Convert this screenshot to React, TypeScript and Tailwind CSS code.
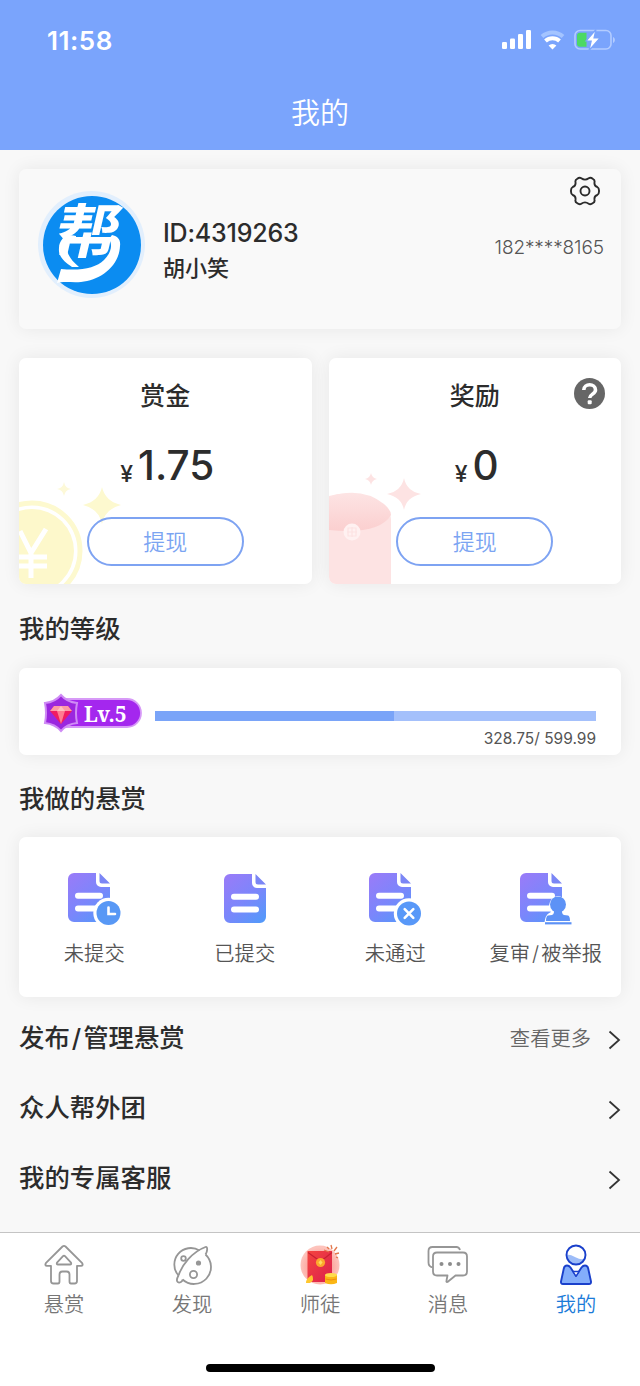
// App.tsx - "Mine" tab of the bounty app
import type { ReactNode } from "react";

type IconProps = {
  className?: string;
};

type DocIconProps = {
  id: string;
  dx?: number;
  dy?: number;
  children?: ReactNode;
};

type WalletCardProps = {
  title: string;
  amount: string;
  art: ReactNode;
  help?: boolean;
};

const CARD = "bg-white rounded-[7px] shadow-[0_0_18px_rgba(0,0,0,0.07)]";

// Status bar
const StatusIcons = () => (
  <svg width="116" height="24" viewBox="0 0 116 24" fill="none">
    <rect x="2" y="14" width="5" height="7" rx="1.3" fill="#fff" />
    <rect x="10" y="10.500" width="5" height="10.500" rx="1.300" fill="#fff" />
    <rect x="18" y="6" width="5" height="15" rx="1.300" fill="#fff" />
    <rect x="26" y="2" width="5" height="19" rx="1.300" fill="#fff" />
    <path d="M42 8.500a15.500 15.500 0 0 1 21 0" stroke="#a4c4ff" strokeWidth="4" />
    <path d="M45.500 13a10.300 10.300 0 0 1 14 0" stroke="#fff" strokeWidth="4" />
    <path d="M48.600 17.500a5.500 5.500 0 0 1 7.800 0l-3.900 4z" fill="#fff" />
    <rect x="75" y="2.500" width="36" height="18.500" rx="5" stroke="#b3ccff" strokeWidth="1.600" />
    <path d="M80 4.800h6.500v14H80a3 3 0 0 1-3-3v-8a3 3 0 0 1 3-3z" fill="#4cd964" />
    <path d="M113 9c2.500 1 2.500 5 0 6z" fill="#b3ccff" />
    <path d="M96 1.500L86 13h5.200l-2.200 9.500L100 10h-6z" fill="#fff" stroke="#7aa4fc" strokeWidth="1.200" />
  </svg>
);

// Brand mark: slanted lettering over a heart shaped hand
const Avatar = () => (
  <div className="relative flex h-[107px] w-[107px] items-center justify-center rounded-full bg-[#e2effd]">
    <div className="h-[98px] w-[98px] rounded-full bg-[#0b8cf1]" />
    <span className="absolute left-[25px] top-[11px] origin-top -skew-x-12 scale-y-[0.92] text-[64px] font-bold leading-[64px] text-white">
      帮
    </span>
    <svg className="absolute inset-0" width="107" height="107" viewBox="0 0 107 107" fill="#fff">
      <path d="M38 45c-9-3-17 3-17 12-1 9 6 14 13 19h7c-7-6-12-12-12-19 0-5 4-9 9-8z" />
      <path d="M74 44c5 1 9 4 8 11-1 21-20 34-39 36-8 1-17-1-24 1l4-14c20 2 35-1 43-9 7-7 9-15 5-21z" />
    </svg>
  </div>
);

const GearIcon = ({ className }: IconProps) => (
  <svg className={className} width="30" height="30" viewBox="0 0 30 30" fill="none" stroke="#2b2b2b" strokeWidth="1.900" strokeLinejoin="round">
    <path d="M7 3Q9.500 1 11.300 2.300Q15 5 18.700 2.300Q20.500 1 23 3Q25 4 24.500 6.300Q24 10 27.300 11Q29.200 12 29 15Q29.200 18 27.300 19Q24 20 24.500 23.700Q25 26 23 27Q20.500 29 18.700 27.700Q15 25 11.300 27.700Q9.500 29 7 27Q5 26 5.500 23.700Q6 20 2.700 19Q.8 18 1 15Q.8 12 2.700 11Q6 10 5.500 6.300Q5 4 7 3z" />
    <circle cx="15" cy="15" r="4.500" />
  </svg>
);

// Faded artwork in the corners of the wallet cards
const CoinArt = () => (
  <svg className="absolute bottom-0 left-0" width="110" height="110" viewBox="0 0 110 110" fill="none">
    <circle cx="13" cy="77" r="48" stroke="#fdf9cf" strokeWidth="5" />
    <circle cx="13" cy="77" r="42" fill="#fdf8cb" />
    <path d="M1 57l11 22 15-24M12 78v26M0 83h28M0 92h28" stroke="#fff" strokeWidth="5" />
    <path d="M83 13q3 14 19 18q-16 4-19 19q-3-15-19-19q16-4 19-18z" fill="#fdf9cf" />
    <path d="M45 8q1 6 7 7q-6 1-7 7q-1-6-7-7q6-1 7-7z" fill="#fdf9d8" />
  </svg>
);

const PacketArt = () => (
  <svg className="absolute bottom-0 left-0" width="110" height="115" viewBox="0 0 110 115" fill="none">
    <defs>
      <linearGradient id="flap" x1="0" y1="0" x2="0" y2="1">
        <stop offset="0" stopColor="#fde4e4" />
        <stop offset="1" stopColor="#fbcfcf" />
      </linearGradient>
    </defs>
    <path d="M0 27q30-8 54 10q8 6 8 14v64H0z" fill="#fde3e3" />
    <path d="M0 28Q32 17 55 35q7 6 7 11Q50 66 0 61z" fill="url(#flap)" />
    <circle cx="23" cy="63" r="8.500" fill="#fff1f1" />
    <path d="M19 59h8v8h-8zM23 58v10M18 63h10" stroke="#fde3e3" strokeWidth="1.200" />
    <path d="M75 9q2.500 13 17 16q-14.500 3-17 16q-2.500-13-17-16q14.500-3 17-16z" fill="#fde3e3" />
    <path d="M42 4q1 5 6 6q-5 1-6 6q-1-5-6-6q5-1 6-6z" fill="#fde3e3" />
  </svg>
);

const WalletCard = ({ title, amount, art, help }: WalletCardProps) => (
  <div className={`relative flex h-[226px] flex-1 flex-col items-center overflow-hidden pt-[20px] ${CARD}`}>
    {art}
    <h2 className="text-[25px] font-medium leading-[36px]">{title}</h2>
    {help && (
      <svg className="absolute right-[16px] top-[20px]" width="31" height="31" viewBox="0 0 31 31" fill="none">
        <circle cx="15.500" cy="15.500" r="15.500" fill="#666" />
        <path d="M9.800 12c0-7 11.700-7 11.700 0 0 4-5.800 4.200-5.800 8" stroke="#fff" strokeWidth="3.600" />
        <rect x="13.700" y="22.200" width="4" height="4" rx="1" fill="#fff" />
      </svg>
    )}
    <div className="mt-[27px] flex h-[50px] items-baseline gap-[5px] pl-[4px] leading-[50px]">
      <span className="relative top-[2px] text-[23px] font-medium">¥</span>
      <span className="text-[40.500px] font-medium">{amount}</span>
    </div>
    <button className="relative mt-[26px] h-[49px] w-[157px] rounded-full border-2 border-[#7ea3f2] text-[22px] font-[350] leading-[46px] text-[#7ba4f2]">
      提现
    </button>
  </div>
);

const LevelBadge = () => (
  <div className="relative h-[40px] w-[100px]">
    <svg className="absolute inset-0" width="100" height="40" viewBox="0 0 100 40">
      <path d="M20 6h64a14 14 0 0 1 0 28H20z" fill="#a427ee" stroke="#d79af7" strokeWidth="1.800" />
      <path d="M18 2q6 7 16 8q-2 10 0 20q-10 1-16 8q-6-7-16-8q2-10 0-20q10-1 16-8z" fill="#9b27df" stroke="#cf8bf5" strokeWidth="2" />
      <path d="M11 13h14l4 5-11 13L7 18z" fill="#f01c62" />
      <path d="M11 13h14l4 5H7z" fill="#ff9aa6" />
      <path d="M14 18h8l-4 13z" fill="#ff7c91" />
      <path d="M18 13l4 5h-8z" fill="#ffc1bf" />
    </svg>
    <span className="absolute left-[41px] top-[9px] font-['Noto_Serif','Liberation_Serif',serif] text-[21px] font-bold leading-[25px] text-white">
      Lv.5
    </span>
  </div>
);

// Shared document shape, badges are passed as children
const DocIcon = ({ id, dx = 0, dy = 0, children }: DocIconProps) => (
  <svg width="60" height="60" viewBox="0 0 60 60" fill="none">
    <defs>
      <linearGradient id={id} x1="5" y1="5" x2="48" y2="56" gradientUnits="userSpaceOnUse">
        <stop stopColor="#9a7bf8" />
        <stop offset=".5" stopColor="#7b86fb" />
        <stop offset="1" stopColor="#4b9dfa" />
      </linearGradient>
    </defs>
    <g transform={`translate(${dx} ${dy})`}>
      <path d="M10 5h22v9a5 5 0 0 0 5 5h9v29a6 6 0 0 1-6 6H10a6 6 0 0 1-6-6V11a6 6 0 0 1 6-6z" fill={`url(#${id})`} />
      <path d="M35.500 5l10.500 10.500h-8a2.500 2.500 0 0 1-2.500-2.500z" fill="#7b86f5" />
      <path d="M14 27.700h22M14 40.500h22" stroke="#fff" strokeWidth="6" strokeLinecap="round" />
    </g>
    {children}
  </svg>
);

const tasks = [
  {
    label: "未提交",
    icon: (
      <DocIcon id="doc-pending">
        <circle cx="44.500" cy="45" r="15.200" fill="#fff" />
        <circle cx="44.500" cy="45" r="12" fill="#5898f5" />
        <path d="M44.500 39.500v6.500h6.500" stroke="#fff" strokeWidth="2.600" strokeLinecap="round" />
      </DocIcon>
    ),
  },
  {
    label: "已提交",
    icon: <DocIcon id="doc-done" dx={5} dy={1} />,
  },
  {
    label: "未通过",
    icon: (
      <DocIcon id="doc-failed">
        <circle cx="44" cy="45.500" r="15.200" fill="#fff" />
        <circle cx="44" cy="45.500" r="12" fill="#5898f8" />
        <path d="M39.700 41.200l8.600 8.600M48.300 41.200l-8.600 8.600" stroke="#fff" strokeWidth="2.600" strokeLinecap="round" />
      </DocIcon>
    ),
  },
  {
    label: "复审/被举报",
    icon: (
      <DocIcon id="doc-review">
        <path
          d="M42 30a8 8 0 0 1 5 13l1 3q5 1 6 7v4H30l1-5q1-5 5-6l1-3a8 8 0 0 1 5-13z"
          fill="#fff"
          stroke="#fff"
          strokeWidth="4"
        />
        <circle cx="42" cy="36.500" r="8" fill="#5d92f6" />
        <path d="M37.500 40h9c-1 4-.5 6.500 1.500 7l4 .5q2 .5 2 5.500H30q0-5 2-5.500l4-.5c2-.5 2.500-3 1.500-7z" fill="#5d92f6" />
        <path d="M29 55.300h26.500" stroke="#5d92f6" strokeWidth="2.200" />
      </DocIcon>
    ),
  },
];

const links = [
  { label: "发布/管理悬赏", extra: "查看更多" },
  { label: "众人帮外团" },
  { label: "我的专属客服" },
];

// Gives the slash between two words a little air
const Label = ({ text }: { text: string }) => {
  const [head, tail] = text.split("/");
  if (!tail) return <>{text}</>;
  return (
    <>
      {head}
      <span className="mx-[2px]">/</span>
      {tail}
    </>
  );
};

const HomeIcon = () => (
  <svg width="42" height="42" viewBox="0 0 42 42" fill="none" stroke="#969696" strokeWidth="1.800" strokeLinejoin="round">
    <path d="M19.500 2.500q1.500-1.200 3 0l16.700 16.700q1.300 2.300-1.200 2.600h-4V37q0 2.500-2.500 2.500H28q-1.500 0-1.500-2v-7q0-3-3-3h-4q-3 0-3 3v7q0 2-1.500 2h-4.500Q8 39.500 8 37V21.800H4Q1.500 21.500 2.800 19.200z" />
    <path d="M20 12.200q1-1 2 0l6 6.500q.8 1.800-1 1.800H15q-1.800 0-1-1.800z" />
  </svg>
);

const DiscoverIcon = () => (
  <svg width="42" height="42" viewBox="0 0 42 42" fill="none" stroke="#969696" strokeWidth="1.800" strokeLinejoin="round">
    <path d="M28.500 6.500A16.500 16.500 0 0 0 7.500 31.500M34.500 10.500A16.500 16.500 0 0 1 11.500 35.500" />
    <path d="M7.500 31.500C11 21 21 8 34.500 3c2.500-.7 2 4.500 0 7.500M7.500 31.500c-3.500 6-.5 8 2.500 6.500 1-.5 1.500-1.500 1.500-2.500" />
    <circle cx="12.500" cy="14.500" r="2.300" />
    <circle cx="27.500" cy="19" r="1.700" fill="#969696" />
    <circle cx="22.500" cy="30.500" r="3.600" />
  </svg>
);

const MentorIcon = () => (
  <svg width="42" height="42" viewBox="0 0 42 42" fill="none">
    <defs>
      <radialGradient id="glow" cx=".5" cy=".55" r=".5">
        <stop offset="0" stopColor="#fb7d73" />
        <stop offset="1" stopColor="#fdc3bc" />
      </radialGradient>
      <linearGradient id="packet" x1="0" y1="0" x2="1" y2="1">
        <stop offset="0" stopColor="#f4463f" />
        <stop offset="1" stopColor="#dc1f4d" />
      </linearGradient>
    </defs>
    <circle cx="21" cy="21" r="19.500" fill="url(#glow)" />
    <path d="M8.500 7H33v31H12q-3.500 0-3.500-3z" fill="url(#packet)" />
    <path d="M9 8.500l12.500 9 11.500-9" stroke="#c91f32" strokeWidth="1.100" />
    <circle cx="21.500" cy="18.500" r="4.600" fill="#fca92d" />
    <path d="M21.500 16l2 2.500-2 2.500-2-2.500z" fill="#ffdb61" />
    <path d="M26 31q6-3 12 0v8q-6 2.500-12 0z" fill="#fbb615" />
    <ellipse cx="32" cy="31" rx="6" ry="2" fill="#ffdc4c" />
    <path d="M26.500 35q5.500 2 11 0" stroke="#f08d12" />
    <path d="M7 39q0-5 6-8q3 5-2 8z" fill="#ffc72e" />
    <path d="M25 6l5 2M32 1l1 4M38 3l-3 4M36 10l4-1M37 13l2 1M28 3l2 2" stroke="#e3774b" strokeWidth="1.300" />
  </svg>
);

const MessageIcon = () => (
  <svg width="42" height="42" viewBox="0 0 42 42" fill="none" stroke="#969696" strokeWidth="1.800" strokeLinejoin="round">
    <path d="M5.500 23.500q-4-1-4-5V7q0-4 4-4h24q2.500 0 3.500 3" />
    <path d="M10 8.500h26q4 0 4 4v15q0 4-4 4h-7.500l-8 6.500q-1.500.5-1-1.500l1-5H10q-4 0-4-4v-15q0-4 4-4z" />
    <g fill="#8c8c8c" stroke="none">
      <circle cx="14.500" cy="20" r="2" />
      <circle cx="23" cy="20" r="2" />
      <circle cx="31.500" cy="20" r="2" />
    </g>
  </svg>
);

const MineIcon = () => (
  <svg width="42" height="42" viewBox="0 0 42 42" fill="none" stroke="#1a40cb" strokeWidth="1.900" strokeLinejoin="round">
    <path d="M12 10.500q4 0 9 3t9 1q-2.500 6-9 6-8 0-9-10z" fill="#9dbcf8" stroke="none" />
    <circle cx="21" cy="11" r="9.500" />
    <path d="M12 21.500q-2.500 0-3.200 3L6 37.500q-.3 2.500 2 2.500h26q2.300 0 2-2.500l-2.800-13q-.7-3-3.200-3-2 0-3.500 2L21 32l-5.500-8.500q-1.500-2-3.500-2z" fill="#83adfb" />
    <path d="M18 27.500L21 32l3-4.500z" fill="#fff" strokeWidth="1.300" />
  </svg>
);

const tabs = [
  { label: "悬赏", icon: <HomeIcon /> },
  { label: "发现", icon: <DiscoverIcon /> },
  { label: "师徒", icon: <MentorIcon /> },
  { label: "消息", icon: <MessageIcon /> },
  { label: "我的", icon: <MineIcon />, active: true },
];

const App = () => {
  return (
    <div className="flex h-[1386px] w-[640px] flex-col overflow-hidden bg-[#f8f8f8] font-['Inter','Noto_Sans_CJK_SC',sans-serif] text-[#2c2c2c]">
      {/* Header */}
      <header className="h-[150px] shrink-0 bg-[#7aa4fc] text-white">
        <div className="flex h-[80px] items-center justify-between pl-[47px] pr-[24px]">
          <span className="text-[26px] font-semibold tracking-[0.5px]">11:58</span>
          <StatusIcons />
        </div>
        <h1 className="text-center text-[29px] font-[350] leading-[67px]">我的</h1>
      </header>

      <main className="flex-1 px-[19px] pt-[19px]">
        {/* Profile */}
        <section className="flex h-[160px] rounded-[7px] bg-[#f9f9f9] pl-[19px] pr-[17px] shadow-[0_0_18px_rgba(0,0,0,0.07)]">
          <div className="pt-[22px]">
            <Avatar />
          </div>
          <div className="flex-1 pl-[18px] pt-[46px]">
            <p className="text-[25px] font-medium leading-[36px] tracking-[-0.2px]">ID:4319263</p>
            <p className="text-[22px] font-medium leading-[35px]">胡小笑</p>
          </div>
          <div className="flex flex-col items-end pt-[7px]">
            <GearIcon className="mr-[4px]" />
            <p className="mt-[28px] text-[19px] font-light leading-[28px] tracking-[-0.1px] text-[#555]">182****8165</p>
          </div>
        </section>

        {/* Wallet */}
        <section className="mt-[29px] flex gap-[17px]">
          <WalletCard title="赏金" amount="1.75" art={<CoinArt />} />
          <WalletCard title="奖励" amount="0" art={<PacketArt />} help />
        </section>

        {/* Level */}
        <h2 className="mt-[27px] text-[25.400px] font-medium leading-[36px]">我的等级</h2>
        <section className={`mt-[21px] flex h-[87px] pl-[24px] pr-[25px] pt-[25px] ${CARD}`}>
          <LevelBadge />
          <div className="flex-1 pl-[12px] pt-[18px]">
            <div className="h-[10px] bg-[#a4c0fb]">
              <div className="h-full bg-[#7aa4f8]" style={{ width: `${(239 / 441) * 100}%` }} />
            </div>
            <p className="mt-[5px] text-right text-[15.500px] leading-[25px] text-[#555]">328.75/ 599.99</p>
          </div>
        </section>

        {/* Tasks */}
        <h2 className="mt-[26px] text-[25.400px] font-medium leading-[36px]">我做的悬赏</h2>
        <section className={`mt-[20px] grid h-[160px] grid-cols-4 pt-[31px] ${CARD}`}>
          {tasks.map((task) => (
            <div key={task.label} className="flex flex-col items-center">
              {task.icon}
              <span className="mt-[11px] whitespace-nowrap text-[20.300px] font-[350] leading-[30px] text-[#555]">
                <Label text={task.label} />
              </span>
            </div>
          ))}
        </section>

        {/* Links */}
        <nav className="mt-[6px]">
          {links.map((link) => (
            <div key={link.label} className="flex h-[70px] items-center">
              <span className="flex-1 text-[25.400px] font-medium">
                <Label text={link.label} />
              </span>
              {link.extra && <span className="mr-[17px] mt-[2px] text-[20.300px] font-[350] text-[#666]">{link.extra}</span>}
              <svg className="mt-[4px]" width="13" height="20" viewBox="0 0 13 20" fill="none">
                <path d="M1.500 1.500L11 10l-9.500 8.500" stroke="#333" strokeWidth="1.800" />
              </svg>
            </div>
          ))}
        </nav>
      </main>

      {/* Tab bar */}
      <footer className="h-[154px] shrink-0 border-t border-[#c4c4c4] bg-white">
        <div className="grid h-[131px] grid-cols-5 pt-[11px]">
          {tabs.map((tab) => (
            <div key={tab.label} className="flex flex-col items-center">
              {tab.icon}
              <span className={`mt-[4px] text-[20.300px] font-[350] leading-[30px] ${tab.active ? "text-[#1b7bd8]" : "text-[#777]"}`}>
                {tab.label}
              </span>
            </div>
          ))}
        </div>
        <div className="mx-auto h-[8px] w-[229px] rounded-full bg-black" />
      </footer>
    </div>
  );
};

export default App;
